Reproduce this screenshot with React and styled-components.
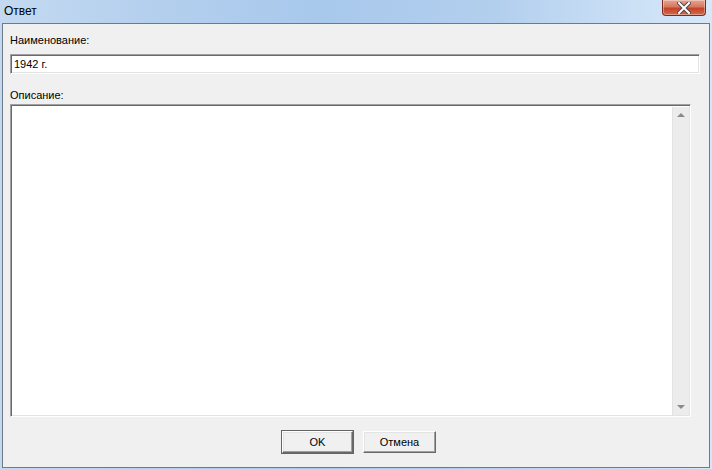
import styled, { createGlobalStyle } from "styled-components";

const GlobalStyle = createGlobalStyle`
  html, body {
    margin: 0;
    padding: 0;
    background: #b9d3ef;
  }
  * {
    box-sizing: border-box;
  }
`;

const Window = styled.div`
  width: 712px;
  height: 469px;
  display: flex;
  flex-direction: column;
  background: linear-gradient(90deg, #c3d9f1 0%, #b5d0ee 20%, #a8c8ec 45%, #b3cfee 70%, #cde1f6 90%, #d6e7f8 100%);
  font-family: "Liberation Sans", Arial, sans-serif;
  font-size: 11px;
  color: #000;
  overflow: hidden;
`;

const TitleBar = styled.div`
  height: 23px;
  display: flex;
  align-items: flex-start;
  padding-left: 4px;
  padding-right: 6px;
`;

const Title = styled.div`
  font-size: 12px;
  line-height: 22px;
  color: #000;
`;

const CloseButton = styled.div`
  margin-left: auto;
  width: 44px;
  height: 16px;
  border: 1px solid #7a2b20;
  border-top: none;
  border-radius: 0 0 4px 4px;
  background: linear-gradient(180deg, #e8a493 0%, #d7785f 45%, #c4432a 55%, #d36a4c 100%);
  display: flex;
  align-items: center;
  justify-content: center;
  box-shadow: inset 0 0 0 1px rgba(255, 255, 255, 0.35);
`;

const Frame = styled.div`
  flex: 1;
  display: flex;
  padding: 0 2px 1px 2px;
`;

const Content = styled.div`
  flex: 1;
  background: #f0f0f0;
  border: 1px solid #6e7a86;
  display: flex;
  flex-direction: column;
  padding: 9px 9px 0 7px;
`;

const Label = styled.div`
  height: 14px;
  line-height: 14px;
  margin-top: ${(p) => p.$top || 0}px;
`;

const TextInput = styled.div`
  margin-top: 7px;
  height: 20px;
  background: #fff;
  border-style: solid;
  border-width: 1px;
  border-color: #a0a0a0 #fff #fff #a0a0a0;
  box-shadow: inset 1px 1px 0 #696969, inset -1px -1px 0 #e3e3e3;
  padding: 0 3px;
  line-height: 18px;
  font-size: 11px;
`;

const TextArea = styled.div`
  margin-top: 2px;
  width: 681px;
  height: 313px;
  background: #fff;
  border-style: solid;
  border-width: 1px;
  border-color: #a0a0a0 #fff #fff #a0a0a0;
  box-shadow: inset 1px 1px 0 #696969, inset -1px -1px 0 #e3e3e3;
  display: flex;
  justify-content: flex-end;
  padding: 2px 1px 1px 2px;
`;

const ScrollBar = styled.div`
  width: 17px;
  background: #ececec;
  border-left: 1px solid #e2e2e2;
  display: flex;
  flex-direction: column;
  justify-content: space-between;
  align-items: center;
  padding: 6px 0 6px;
`;

const Arrow = styled.div`
  width: 0;
  height: 0;
  border-left: 4px solid transparent;
  border-right: 4px solid transparent;
  ${(p) =>
    p.$down
      ? "border-top: 4px solid #8a8a8a;"
      : "border-bottom: 4px solid #8a8a8a;"}
`;

const ButtonRow = styled.div`
  margin-top: 14px;
  display: flex;
  gap: 10px;
  padding-left: 272px;
`;

const Button = styled.div`
  width: ${(p) => p.$w || 72}px;
  height: 22px;
  background: #f0f0f0;
  border-style: solid;
  border-width: 1px;
  border-color: #fff #696969 #696969 #fff;
  box-shadow: inset -1px -1px 0 #a0a0a0, inset 1px 1px 0 #e3e3e3;
  display: flex;
  align-items: center;
  justify-content: center;
  font-size: 11px;
`;

const DefaultButton = styled(Button)`
  outline: 1px solid #646464;
  outline-offset: 0;
  border-color: #fff #696969 #696969 #fff;
`;

export default function App() {
  return (
    <>
      <GlobalStyle />
      <Window>
        <TitleBar>
          <Title>Ответ</Title>
          <CloseButton>
            <svg width="14" height="12" viewBox="0 0 14 12">
              <path
                d="M2 1 L12 11 M12 1 L2 11"
                stroke="#4a4a4a"
                strokeWidth="4"
                strokeLinecap="square"
              />
              <path
                d="M2 1 L12 11 M12 1 L2 11"
                stroke="#fff"
                strokeWidth="2"
                strokeLinecap="square"
              />
            </svg>
          </CloseButton>
        </TitleBar>
        <Frame>
          <Content>
            <Label>Наименование:</Label>
            <TextInput>1942 г.</TextInput>
            <Label $top={14}>Описание:</Label>
            <TextArea>
              <ScrollBar>
                <Arrow />
                <Arrow $down />
              </ScrollBar>
            </TextArea>
            <ButtonRow>
              <DefaultButton $w={71}>OK</DefaultButton>
              <Button $w={73}>Отмена</Button>
            </ButtonRow>
          </Content>
        </Frame>
      </Window>
    </>
  );
}
